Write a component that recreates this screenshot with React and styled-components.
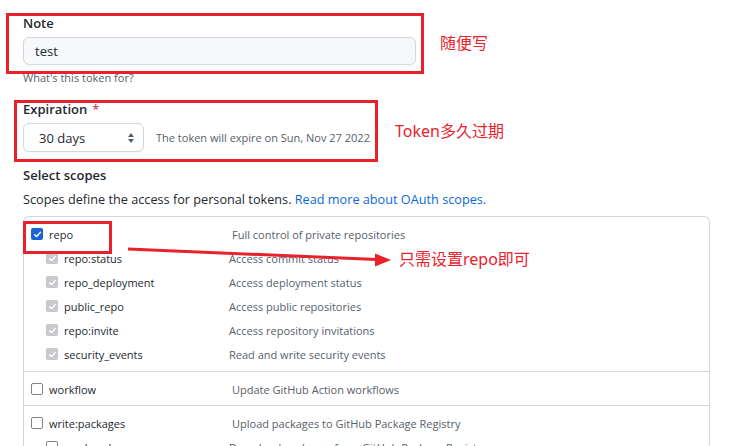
import React from 'react';
import styled, { createGlobalStyle } from 'styled-components';

const GlobalStyle = createGlobalStyle`
  body {
    margin: 0;
    background: #ffffff;
    font-family: "Open Sans", "Noto Sans", sans-serif;
    color: #24292f;
  }
`;

const RED = '#e8212b';

const Page = styled.div`
  position: relative;
  width: 733px;
  height: 446px;
  overflow: hidden;
  padding: 15px 0 0 23px;
  box-sizing: border-box;
`;

const Form = styled.div`
  width: 687px;
  display: flex;
  flex-direction: column;
`;

const Label = styled.div`
  font-size: 13px;
  font-weight: 600;
  line-height: 17px;
  height: 17px;
  margin-top: ${p => p.$top || 0}px;
  margin-bottom: ${p => p.$gap || 5}px;

  .req {
    color: #cf222e;
    font-weight: 400;
    margin-left: 5px;
  }
`;

const TextInput = styled.div`
  width: 393px;
  height: 28px;
  box-sizing: border-box;
  background: #f6f8fa;
  border: 1px solid #d0d7de;
  border-radius: 6px;
  padding: 0 11px;
  font-size: 13px;
  line-height: 26px;
`;

const Hint = styled.div`
  font-size: 11px;
  color: #57606a;
  margin-top: 6px;
  line-height: 14px;
`;

const ExpRow = styled.div`
  display: flex;
  align-items: center;
  gap: 12px;
`;

const Select = styled.div`
  width: 121px;
  height: 29px;
  box-sizing: border-box;
  border: 1px solid #d0d7de;
  border-radius: 6px;
  display: flex;
  align-items: center;
  justify-content: space-between;
  padding: 0 8px 0 15px;
  font-size: 13px;
  box-shadow: 0 1px 0 rgba(27, 31, 36, 0.04);
`;

const Note = styled.div`
  font-size: 11px;
  color: #57606a;
`;

const Heading = styled.div`
  font-size: 13px;
  font-weight: 600;
  line-height: 17px;
  margin-top: 15px;
`;

const Para = styled.div`
  font-size: 12.7px;
  line-height: 17px;
  margin-top: 7px;

  a {
    color: #0969da;
    text-decoration: none;
  }
`;

const ScopeBox = styled.div`
  margin-top: 8px;
  border: 1px solid #d0d7de;
  border-bottom: none;
  border-radius: 6px 6px 0 0;
`;

const Group = styled.div`
  padding: ${p => (p.$first ? '5px 0 5px' : '5px 0 4px')};
  border-top: ${p => (p.$first ? 'none' : '1px solid #d0d7de')};
`;

const Row = styled.div`
  display: grid;
  grid-template-columns: ${p => (p.$sub ? '183px 1fr' : '201px 1fr')};
  align-items: center;
  height: 24px;
  padding-left: ${p => (p.$sub ? 22 : 7)}px;
  font-size: 11px;
`;

const Name = styled.div`
  display: flex;
  align-items: center;
  gap: 6px;
  font-size: 11px;
  color: #24292f;
`;

const Desc = styled.div`
  color: #57606a;
  font-size: 11px;
`;

const Box = styled.span`
  width: 12px;
  height: 12px;
  box-sizing: border-box;
  border-radius: 2px;
  display: inline-flex;
  align-items: center;
  justify-content: center;
  flex: none;
  background: ${p => (p.$state === 'on' ? '#1a64d6' : p.$state === 'dim' ? '#c7c9cc' : '#fff')};
  border: ${p => (p.$state === 'off' ? '1px solid #7d848c' : 'none')};
`;

const Annot = styled.div`
  position: absolute;
  left: ${p => p.$x}px;
  top: ${p => p.$y}px;
  width: ${p => p.$w}px;
  height: ${p => p.$h}px;
  border: 3px solid ${RED};
  box-sizing: border-box;
  pointer-events: none;
`;

const AnnotText = styled.div`
  position: absolute;
  left: ${p => p.$x}px;
  top: ${p => p.$y}px;
  color: ${RED};
  font-size: 16px;
  line-height: 20px;
  font-family: "Noto Sans", "Noto Sans CJK SC", sans-serif;
  white-space: nowrap;
`;

const Arrow = styled.svg`
  position: absolute;
  left: 0;
  top: 0;
  pointer-events: none;
`;

const Check = ({ state }) => (
  <Box $state={state}>
    {state !== 'off' && (
      <svg width="9" height="9" viewBox="0 0 10 10">
        <path d="M1.8 5.2 L4 7.3 L8.3 2.6" fill="none" stroke="#fff" strokeWidth="1.6" strokeLinecap="round" strokeLinejoin="round" />
      </svg>
    )}
  </Box>
);

const Updown = () => (
  <svg width="8" height="12" viewBox="0 0 8 12">
    <path d="M4 1 L7 5 H1 Z" fill="#57606a" />
    <path d="M4 11 L7 7 H1 Z" fill="#57606a" />
  </svg>
);

const repoSubs = [
  ['repo:status', 'Access commit status'],
  ['repo_deployment', 'Access deployment status'],
  ['public_repo', 'Access public repositories'],
  ['repo:invite', 'Access repository invitations'],
  ['security_events', 'Read and write security events'],
];

export default function App() {
  return (
    <>
      <GlobalStyle />
      <Page>
        <Form>
          <Label>Note</Label>
          <TextInput>test</TextInput>
          <Hint>What's this token for?</Hint>

          <Label $top={16} $gap={5}>
            Expiration<span className="req">*</span>
          </Label>
          <ExpRow>
            <Select>
              <span>30 days</span>
              <Updown />
            </Select>
            <Note>The token will expire on Sun, Nov 27 2022</Note>
          </ExpRow>

          <Heading>Select scopes</Heading>
          <Para>
            Scopes define the access for personal tokens. <a href="#">Read more about OAuth scopes.</a>
          </Para>

          <ScopeBox>
            <Group $first>
              <Row>
                <Name><Check state="on" />repo</Name>
                <Desc>Full control of private repositories</Desc>
              </Row>
              {repoSubs.map(([n, d]) => (
                <Row $sub key={n}>
                  <Name><Check state="dim" />{n}</Name>
                  <Desc>{d}</Desc>
                </Row>
              ))}
            </Group>
            <Group>
              <Row>
                <Name><Check state="off" />workflow</Name>
                <Desc>Update GitHub Action workflows</Desc>
              </Row>
            </Group>
            <Group>
              <Row>
                <Name><Check state="off" />write:packages</Name>
                <Desc>Upload packages to GitHub Package Registry</Desc>
              </Row>
              <Row $sub>
                <Name><Check state="off" />read:packages</Name>
                <Desc>Download packages from GitHub Package Registry</Desc>
              </Row>
            </Group>
          </ScopeBox>
        </Form>

        <Annot $x={6} $y={13} $w={418} $h={61} />
        <Annot $x={14} $y={100} $w={364} $h={62} />
        <Annot $x={23} $y={221} $w={89} $h={33} />

        <AnnotText $x={440} $y={33}>随便写</AnnotText>
        <AnnotText $x={395} $y={121}>Token多久过期</AnnotText>
        <AnnotText $x={399} $y={249}>只需设置repo即可</AnnotText>

        <Arrow width="733" height="446" viewBox="0 0 733 446">
          <line x1="128" y1="249" x2="377" y2="259.5" stroke={RED} strokeWidth="3" />
          <path d="M375 253.5 L391 260 L375 266.5 Z" fill={RED} />
        </Arrow>
      </Page>
    </>
  );
}
